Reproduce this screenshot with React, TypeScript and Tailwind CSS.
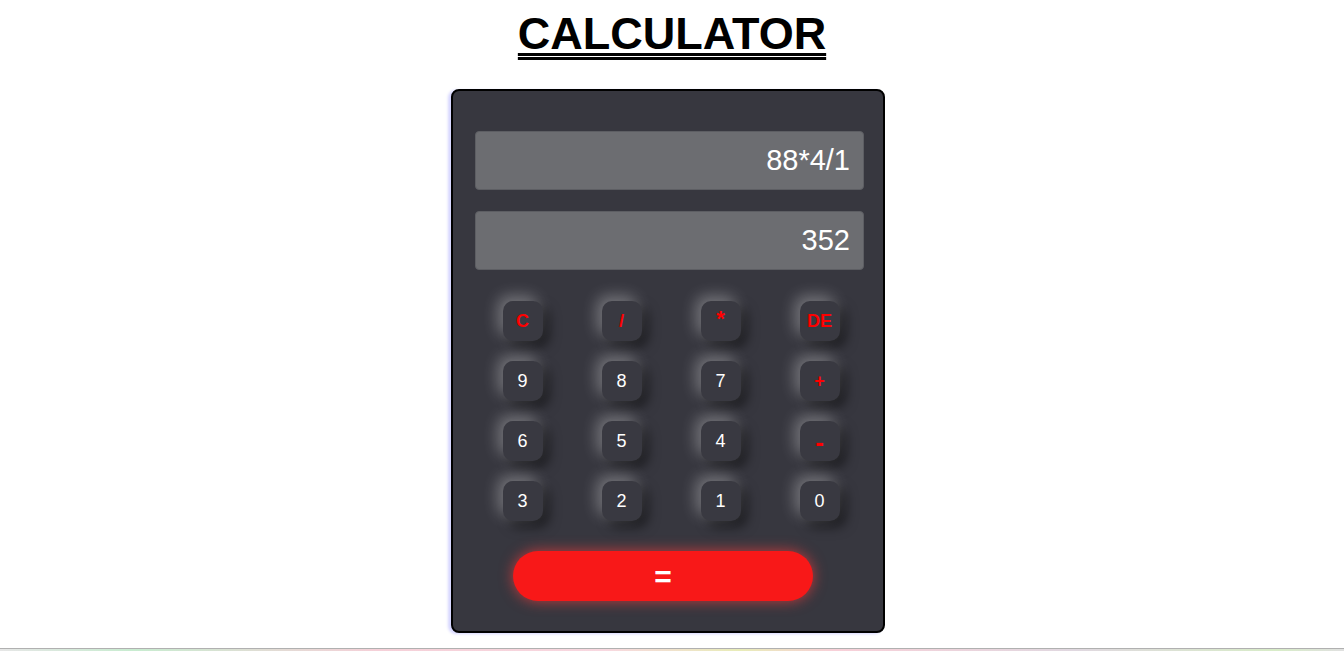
const rows: string[][] = [
  ['C', '/', '*', 'DE'],
  ['9', '8', '7', '+'],
  ['6', '5', '4', '-'],
  ['3', '2', '1', '0'],
];

const isOp = (k: string) => ['C', '/', '*', 'DE', '+', '-'].includes(k);

const Key = ({ label }: { label: string }) => {
  const op = isOp(label);
  return (
    <button
      className={
        'flex h-[40px] w-[40px] items-center justify-center rounded-[10px] bg-[#393941] shadow-[-5px_-5px_15px_rgba(255,255,255,0.32),6px_6px_12px_rgba(0,0,0,0.5)] ' +
        (op ? 'text-[18px] font-bold text-[#ff0000]' : 'text-[18px] text-white')
      }
    >
      <span className={label === '*' ? '-mt-[6px] text-[22px]' : label === '-' ? 'mt-[2px] text-[26px]' : ''}>{label}</span>
    </button>
  );
};

const App = () => {
  return (
    <div className="flex min-h-[651px] flex-col items-center bg-white font-['Liberation_Sans',Arial,sans-serif]">
      <h1 className="mt-[9px] text-[45px] font-bold leading-[49px] text-black underline decoration-double decoration-[3px] underline-offset-[4px]">
        CALCULATOR
      </h1>
      <div className="-ml-[8px] mt-[31px] h-[544px] w-[434px] rounded-[8px] border-2 border-black bg-[#37373f] pl-[22px] pt-[40px] shadow-[-3px_1px_3px_#d6d6ff]">
        <div className="flex h-[59px] w-[389px] items-center justify-end rounded-[4px] border border-[#5d5e63] bg-[#6c6d71] pr-[13px] text-[29px] text-white">
          88*4/1
        </div>
        <div className="mt-[21px] flex h-[59px] w-[389px] items-center justify-end rounded-[4px] border border-[#5d5e63] bg-[#6c6d71] pr-[13px] text-[29px] text-white">
          352
        </div>
        <div className="-ml-[2px] mt-[31px] grid grid-cols-[repeat(4,99px)] gap-y-[20px]">
          {rows.flat().map((k) => (
            <div key={k} className="flex justify-center">
              <Key label={k} />
            </div>
          ))}
        </div>
        <button className="ml-[38px] mt-[30px] flex h-[50px] w-[300px] items-center justify-center rounded-full bg-[#f81818] text-[30px] font-bold text-white shadow-[0_0_14px_rgba(255,60,60,0.7)]">
          =
        </button>
      </div>
      <div className="mt-auto h-[3px] w-full border-t border-[#b0b0b0] bg-[linear-gradient(90deg,#e6e6e6,#c8ecd0_10%,#f5d0d8_28%,#f8d8e0_45%,#e8ecb8_55%,#f8d0d8_62%,#e0d8e0_80%,#d8ecc8_95%,#e0e0e0)]" />
    </div>
  );
};

export default App;
